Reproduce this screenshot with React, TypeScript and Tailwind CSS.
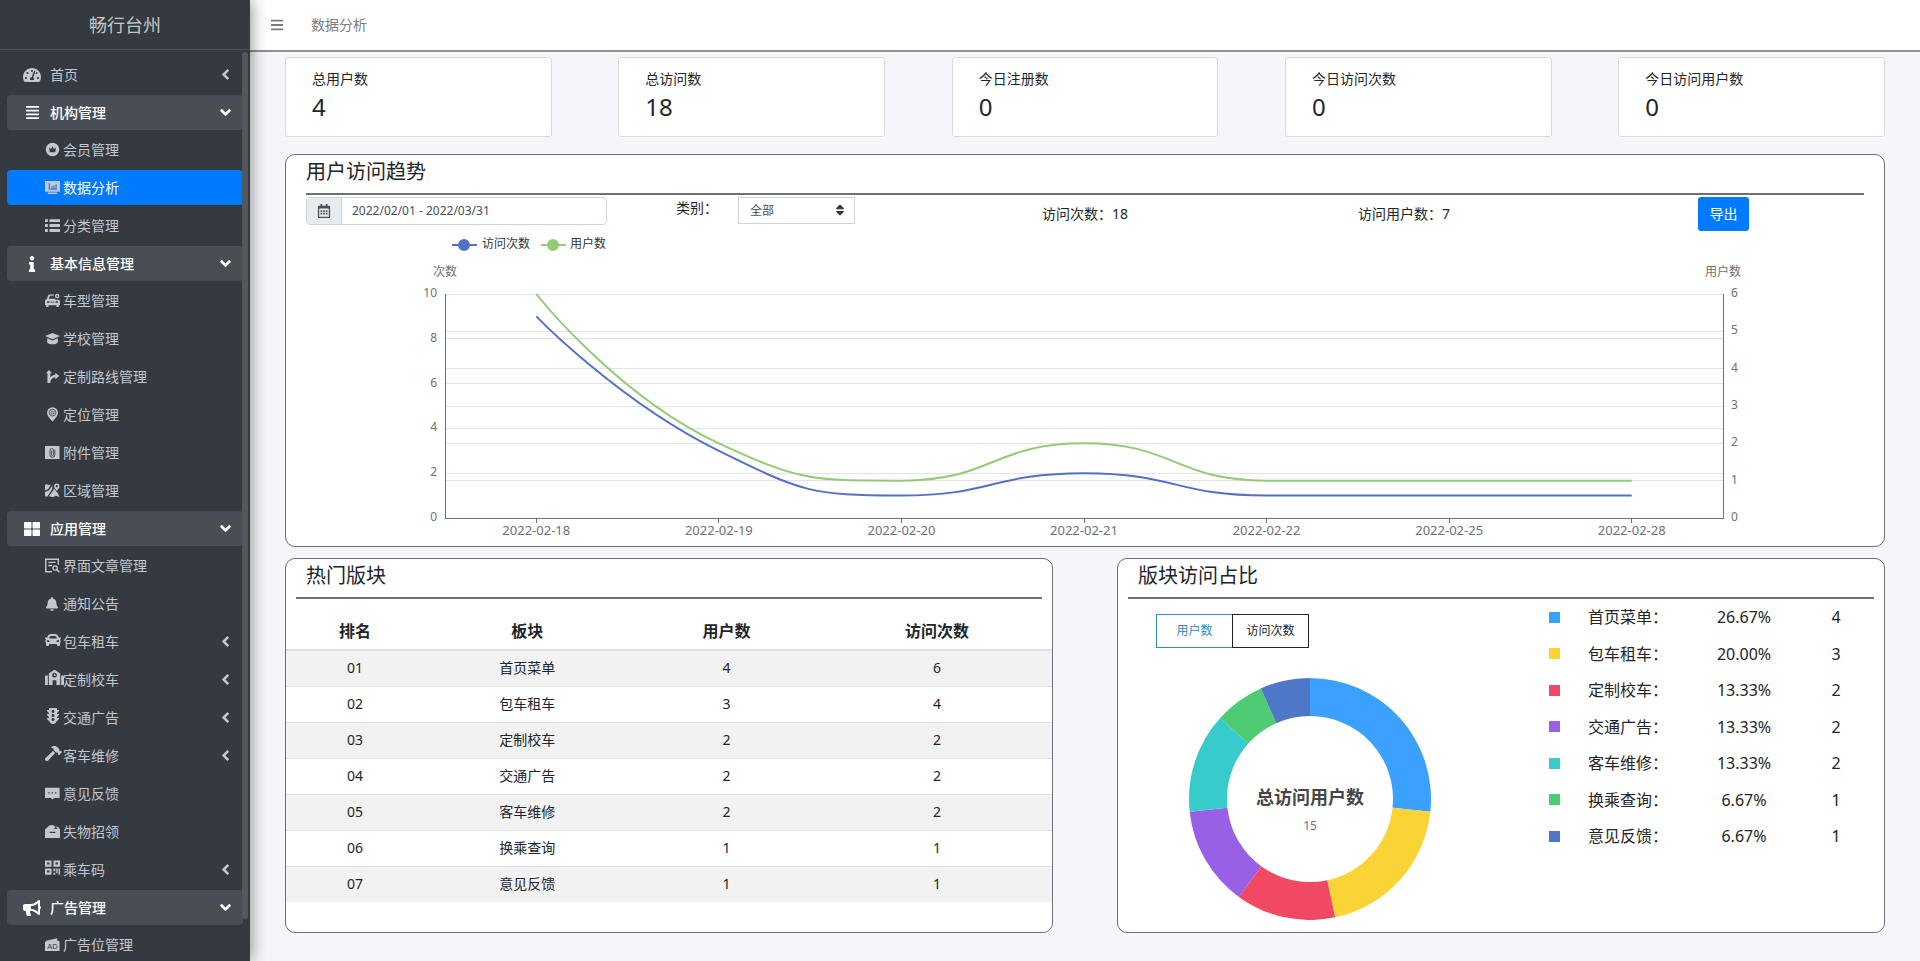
import { useState } from 'react'
import type { ReactNode } from 'react'
import {
  FaAlignJustify,
  FaAngleDown,
  FaAngleLeft,
  FaBars,
  FaBell,
  FaBullhorn,
  FaCar,
  FaHammer,
  FaInfo,
  FaRegCalendarAlt,
  FaSchool,
  FaSort,
  FaTachometerAlt,
  FaThLarge,
  FaTrafficLight,
} from 'react-icons/fa'

type NavItem = {
  label: string
  icon: ReactNode
  kind: 'root' | 'group' | 'sub'
  collapsed?: boolean
}

function Glyph({ children }: { children: ReactNode }) {
  return (
    <svg viewBox="0 0 16 16" className="h-[15px] w-[15px]" fill="currentColor">
      {children}
    </svg>
  )
}

const crownIcon = (
  <Glyph>
    <path fillRule="evenodd" d="M8 .8a7.200 7.200 0 1 1 0 14.400A7.200 7.200 0 0 1 8 .8ZM4.200 5.600l.9 5.200h5.800l.9-5.200-2.200 2L8 4.600l-1.600 3-2.200-2Z" />
  </Glyph>
)

const analysisIcon = (
  <Glyph>
    <path d="M0 1h16v11.500H0zM3 13.300h10v1.500H3z" />
    <path d="M4.600 3.500v6.200h8M7.400 9V6.500M9.600 9V5.800M11.800 9V4.500" fill="none" stroke="#2b7fdb" strokeWidth="1.300" />
  </Glyph>
)

const listIcon = (
  <Glyph>
    <path d="M0 1.200h3v3H0zM0 6.500h3v3H0zM0 11.800h3v3H0zM4.800 1.200H16v3H4.800zM4.800 6.500H16v3H4.800zM4.800 11.800H16v3H4.800z" />
  </Glyph>
)

const vehicleIcon = (
  <Glyph>
    <path fillRule="evenodd" d="M4.300 1.500h5V3H5.200L4.200 6H11v1.200h3.600L16 8.400V13h-1.300v2h-2.400v-2H3.700v2H1.300v-2H0V7.600l1.800-.9L3.400 2.300l.9-.8ZM2.200 8.800v1.700h2.600V8.800H2.200Zm9 0v1.700h2.600V8.800h-2.600ZM6 9.200v1h4v-1H6Z" />
    <path fillRule="evenodd" d="M13 .8a2.400 2.400 0 1 1 0 4.800 2.400 2.400 0 0 1 0-4.800Zm0 1.500a.9.9 0 1 0 0 1.800.9.9 0 0 0 0-1.800Z" />
  </Glyph>
)

const schoolIcon = (
  <Glyph>
    <path d="M8 2 16 5.300 8 8.800 0 5.300 8 2Z" />
    <path d="M2.300 7.600 8 10.200l5.700-2.600v4.600C12.500 13.500 10.500 14.200 8 14.200s-4.500-.7-5.700-2V7.600Z" />
  </Glyph>
)

const routeIcon = (
  <Glyph>
    <path d="M4.200 1 7.400 4.600H5.600v4.200C7.200 7.300 8.800 6.400 11 6.200V4l4.200 3.400L11 10.900V8.800c-2.700.3-4.300 1.900-5.400 4.400V15H2.600V4.600H1L4.200 1Z" />
  </Glyph>
)

const pinIcon = (
  <Glyph>
    <path d="M8 .3a5.800 5.800 0 0 1 5.800 5.700C13.800 9.600 10 13 8 15.700 6 13 2.200 9.600 2.200 6A5.800 5.800 0 0 1 8 .3Z" />
    <circle cx="8" cy="6" r="3.600" fill="none" stroke="#343a40" strokeWidth=".8" />
    <circle cx="8" cy="6" r="1.600" fill="none" stroke="#343a40" strokeWidth=".8" />
  </Glyph>
)

const attachmentIcon = (
  <Glyph>
    <path d="M0 1h15.500v14H0z" />
    <path d="M10.500 5v5.500a2.600 2.600 0 0 1-5.200 0V5.200a1.900 1.900 0 0 1 3.700 0v5.100a1 1 0 0 1-2 0V6" fill="none" stroke="#343a40" strokeWidth=".9" />
  </Glyph>
)

const areaIcon = (
  <Glyph>
    <path d="M0 2.200 1.800 1l2 1.300L6 1.200 5 4 3.400 6.500 0 8V2.200ZM0 9.600l4.300-2L8.200 2.500 7.500 7 2.400 14.600 0 14V9.600Z" />
    <path d="m8.400 8.200 1.500-2 4.400 5.500.9 3.100-3.700-1.100-3.300 1.500-4-1 4.200-6Z" />
    <path fillRule="evenodd" d="M12.600.5A2.900 2.900 0 0 1 15.500 3.400c0 1.900-1.800 3.300-2.900 4.800-1.100-1.500-2.900-2.900-2.900-4.800A2.900 2.900 0 0 1 12.600.5Zm0 1.700a1.200 1.200 0 1 0 0 2.400 1.200 1.200 0 0 0 0-2.400Z" />
  </Glyph>
)

const articleIcon = (
  <Glyph>
    <path d="M7.500 14.700H.8V1.300h13.400v6M3.600 4.700h7.600M3.600 8h4" fill="none" stroke="currentColor" strokeWidth="1.500" />
    <circle cx="10.800" cy="10.600" r="2.300" fill="none" stroke="currentColor" strokeWidth="1.400" />
    <path d="m12.400 12.300 3 3" stroke="currentColor" strokeWidth="1.600" />
  </Glyph>
)

const feedbackIcon = (
  <Glyph>
    <path fillRule="evenodd" d="M0 1.800h15.600v11H9.600L8 14.300l-1.600-1.500H0v-11Zm3.500 4.800v1.300h1.500V6.600H3.500Zm3.600 0v1.300h1.500V6.600H7.100Zm3.600 0v1.300h1.500V6.600h-1.500Z" />
  </Glyph>
)

const lostIcon = (
  <Glyph>
    <path fillRule="evenodd" d="M0 5.800 2.600 3.500 5 1.200h4.500l1 1.600h3.200l2.300 3V15H0V5.800Zm5 2.400v1.400h6V8.200H5Zm5.800-4.700-1 1.700h3.400l-1-1.700h-1.400Z" />
  </Glyph>
)

const qrIcon = (
  <Glyph>
    <path fillRule="evenodd" d="M0 .5h7v6.600H0V.5Zm2.200 2.200v2.200h2.600V2.700H2.200ZM9 .5h7v6.600H9V.5Zm2.200 2.200v2.200h2.600V2.700h-2.600ZM0 9h7v6.600H0V9Zm2.200 2.200v2.200h2.600v-2.200H2.200Z" />
    <path d="M9 9h2v3H9zM12 9h1.500v5H12zM14.500 9H16v6.600h-1.500zM9 13.500h2v2.100H9z" />
  </Glyph>
)

const adIcon = (
  <Glyph>
    <path d="M0 5.500 1.500 4 13 1.200V4h1.500l1 1V15H0V5.500Z" />
    <text x="8" y="12.800" textAnchor="middle" fontSize="8" fontFamily="Liberation Sans" fill="#343a40">AD</text>
  </Glyph>
)

const navItems: NavItem[] = [
  { label: '首页', icon: <FaTachometerAlt size={18} />, kind: 'root', collapsed: true },
  { label: '机构管理', icon: <FaAlignJustify size={15} />, kind: 'group' },
  { label: '会员管理', icon: crownIcon, kind: 'sub' },
  { label: '数据分析', icon: analysisIcon, kind: 'sub' },
  { label: '分类管理', icon: listIcon, kind: 'sub' },
  { label: '基本信息管理', icon: <FaInfo size={16} />, kind: 'group' },
  { label: '车型管理', icon: vehicleIcon, kind: 'sub' },
  { label: '学校管理', icon: schoolIcon, kind: 'sub' },
  { label: '定制路线管理', icon: routeIcon, kind: 'sub' },
  { label: '定位管理', icon: pinIcon, kind: 'sub' },
  { label: '附件管理', icon: attachmentIcon, kind: 'sub' },
  { label: '区域管理', icon: areaIcon, kind: 'sub' },
  { label: '应用管理', icon: <FaThLarge size={16} />, kind: 'group' },
  { label: '界面文章管理', icon: articleIcon, kind: 'sub' },
  { label: '通知公告', icon: <FaBell size={14} />, kind: 'sub' },
  { label: '包车租车', icon: <FaCar size={16} />, kind: 'sub', collapsed: true },
  { label: '定制校车', icon: <FaSchool size={19} />, kind: 'sub', collapsed: true },
  { label: '交通广告', icon: <FaTrafficLight size={16} />, kind: 'sub', collapsed: true },
  { label: '客车维修', icon: <FaHammer size={17} />, kind: 'sub', collapsed: true },
  { label: '意见反馈', icon: feedbackIcon, kind: 'sub' },
  { label: '失物招领', icon: lostIcon, kind: 'sub' },
  { label: '乘车码', icon: qrIcon, kind: 'sub', collapsed: true },
  { label: '广告管理', icon: <FaBullhorn size={18} />, kind: 'group' },
  { label: '广告位管理', icon: adIcon, kind: 'sub' },
]

const stats = [
  { label: '总用户数', value: 4 },
  { label: '总访问数', value: 18 },
  { label: '今日注册数', value: 0 },
  { label: '今日访问次数', value: 0 },
  { label: '今日访问用户数', value: 0 },
]

const sections = [
  { name: '首页菜单', users: 4, visits: 6, percent: '26.67%', color: '#3ba1ff' },
  { name: '包车租车', users: 3, visits: 4, percent: '20.00%', color: '#fad337' },
  { name: '定制校车', users: 2, visits: 2, percent: '13.33%', color: '#f14864' },
  { name: '交通广告', users: 2, visits: 2, percent: '13.33%', color: '#9860e5' },
  { name: '客车维修', users: 2, visits: 2, percent: '13.33%', color: '#37cbcb' },
  { name: '换乘查询', users: 1, visits: 1, percent: '6.67%', color: '#4fcb74' },
  { name: '意见反馈', users: 1, visits: 1, percent: '6.67%', color: '#4f77c8' },
]

const dates = ['2022-02-18', '2022-02-19', '2022-02-20', '2022-02-21', '2022-02-22', '2022-02-25', '2022-02-28']

// plot area of the trend chart
const LEFT = 139
const RIGHT = 1417
const TOP = 62
const BOTTOM = 286
const STEP = (RIGHT - LEFT) / dates.length

const pointX = (i: number) => LEFT + STEP * (i + 0.5)
const pointY = (value: number, max: number) => BOTTOM - (value / max) * (BOTTOM - TOP)

const clamp = (v: number, a: number, b: number) => Math.max(Math.min(v, Math.max(a, b)), Math.min(a, b))

// bezier through all points, control points kept inside each segment's box
function linePath(values: number[], max: number) {
  const pts = values.map((v, i) => [pointX(i), pointY(v, max)])
  let d = `M${pts[0][0]} ${pts[0][1]}`
  let out = pts[0]
  for (let i = 1; i < pts.length; i++) {
    const prev = pts[i - 1]
    const p = pts[i]
    const next = pts[i + 1]
    let into = p
    let nextOut = p
    if (next) {
      const before = Math.hypot(p[0] - prev[0], p[1] - prev[1])
      const after = Math.hypot(next[0] - p[0], next[1] - p[1])
      const ratio = after / (before + after)
      nextOut = p.map((c, k) => clamp(c + (next[k] - prev[k]) * 0.5 * ratio, c, next[k]))
      into = p.map((c, k) => clamp(c - ((nextOut[k] - c) * before) / after, prev[k], c))
      nextOut = p.map((c, k) => c + ((c - into[k]) * after) / before)
    }
    d += ` C${out[0]} ${out[1]} ${into[0]} ${into[1]} ${p[0]} ${p[1]}`
    out = nextOut
  }
  return d
}

function slicePath(start: number, end: number) {
  const point = (r: number, t: number) => {
    const a = t * Math.PI * 2
    return `${121 + r * Math.sin(a)} ${121 - r * Math.cos(a)}`
  }
  const large = end - start > 0.5 ? 1 : 0
  return `M${point(121, start)} A121 121 0 ${large} 1 ${point(121, end)} L${point(83, end)} A83 83 0 ${large} 0 ${point(83, start)} Z`
}

function NavLink({ item, active }: { item: NavItem; active: boolean }) {
  const tone = active
    ? 'mb-[3px] bg-[#007bff] text-white'
    : item.kind === 'group'
      ? 'mb-[2px] bg-[#494e54] font-medium text-white'
      : 'mb-[3px] text-[#c2c7d0]'
  return (
    <a href="#" className={`flex h-[35px] shrink-0 items-center rounded-sm pr-[9px] text-sm ${tone}`}>
      {item.kind === 'sub' ? (
        <span className={`ml-[38px] flex w-[18px] shrink-0 items-center text-[#c2c7d0] ${item.collapsed ? 'pb-1' : ''}`}>
          <span className="shrink-0">{item.icon}</span>
        </span>
      ) : (
        <span className="mr-2 ml-[15px] flex w-5 shrink-0 justify-center">{item.icon}</span>
      )}
      <span className="flex-1">{item.label}</span>
      {item.collapsed && <FaAngleLeft size={17} />}
      {item.kind === 'group' && <FaAngleDown size={17} />}
    </a>
  )
}

function Sidebar() {
  return (
    <aside className="relative z-10 flex h-screen w-[250px] shrink-0 flex-col overflow-hidden bg-[#343a40] shadow-[0_0_16px_rgba(0,0,0,0.5)]">
      <div className="flex h-[50px] shrink-0 items-center justify-center border-b border-[#4b545c] text-lg text-[#c6c8ca]">
        畅行台州
      </div>
      <nav className="flex flex-col px-[7px] pt-[7px]">
        {navItems.map((item) => (
          <NavLink key={item.label} item={item} active={item.label === '数据分析'} />
        ))}
      </nav>
      <div className="absolute top-[52px] right-[2px] bottom-[42px] w-[6px] rounded-full bg-[#54585d]" />
    </aside>
  )
}

function TrendChart() {
  const leftTicks = [0, 2, 4, 6, 8, 10]
  const rightTicks = [0, 1, 2, 3, 4, 5, 6]
  return (
    <svg viewBox="0 0 1558 314" className="w-full" fontSize="12" fill="#6e7079">
      <g strokeWidth="2">
        <path d="M146 13h25" stroke="#5470c6" />
        <circle cx="158" cy="13" r="5" fill="#5470c6" stroke="#5470c6" />
        <path d="M235 13h25" stroke="#91cc75" />
        <circle cx="247" cy="13" r="5" fill="#91cc75" stroke="#91cc75" />
      </g>
      <g fill="#333">
        <text x="176" y="16">访问次数</text>
        <text x="264" y="16">用户数</text>
      </g>
      <text x={LEFT} y="44" textAnchor="middle">次数</text>
      <text x={RIGHT} y="44" textAnchor="middle">用户数</text>
      <g stroke="#e0e3e9" shapeRendering="crispEdges">
        {leftTicks.slice(1).map((t) => (
          <line key={t} x1={LEFT} x2={RIGHT} y1={pointY(t, 10)} y2={pointY(t, 10)} />
        ))}
        {rightTicks.slice(1).map((t) => (
          <line key={t} x1={LEFT} x2={RIGHT} y1={pointY(t, 6)} y2={pointY(t, 6)} />
        ))}
      </g>
      <g stroke="#6e7079" shapeRendering="crispEdges">
        <path d={`M${LEFT} ${TOP}V${BOTTOM}H${RIGHT}V${TOP}`} fill="none" />
        {dates.map((d, i) => (
          <line key={d} x1={pointX(i)} x2={pointX(i)} y1={BOTTOM} y2={BOTTOM + 5} />
        ))}
      </g>
      {leftTicks.map((t) => (
        <text key={t} x={LEFT - 8} y={pointY(t, 10) + 3} textAnchor="end">{t}</text>
      ))}
      {rightTicks.map((t) => (
        <text key={t} x={RIGHT + 8} y={pointY(t, 6) + 3}>{t}</text>
      ))}
      {dates.map((d, i) => (
        <text key={d} x={pointX(i)} y={BOTTOM + 17} textAnchor="middle" fontSize="13">{d}</text>
      ))}
      <path d={linePath([9, 3, 1, 2, 1, 1, 1], 10)} fill="none" stroke="#5470c6" strokeWidth="2" />
      <path d={linePath([6, 2, 1, 2, 1, 1, 1], 6)} fill="none" stroke="#91cc75" strokeWidth="2" />
    </svg>
  )
}

function TrendPanel() {
  return (
    <section className="mt-[17px] rounded-[10px] border border-[#6c6f76] bg-white px-5">
      <h2 className="h-[40px] border-b-2 border-[#6e7074] pt-[3px] text-xl leading-7">用户访问趋势</h2>
      <div className="mt-[2px] grid h-[35px] grid-cols-[370fr_366fr_316fr_340fr_166fr] items-start text-sm">
        <label className="flex h-7 w-[301px] overflow-hidden rounded-sm border border-[#ced4da]">
          <span className="flex w-[35px] shrink-0 items-center justify-center border-r border-[#ced4da] bg-[#e9ecef] text-[#495057]">
            <FaRegCalendarAlt size={14} />
          </span>
          <input type="text" aria-label="日期范围" defaultValue="2022/02/01 - 2022/03/31" className="w-full px-[10px] text-xs text-[#495057] outline-none" />
        </label>
        <div className="flex items-start">
          <label htmlFor="category" className="w-[62px] leading-[22px]">类别：</label>
          <div className="relative">
            <select id="category" className="h-[27px] w-[117px] appearance-none border border-[#ced4da] bg-white px-[11px] text-xs text-[#495057]">
              <option>全部</option>
            </select>
            <FaSort size={14} className="pointer-events-none absolute top-[6px] right-2 text-[#343a40]" />
          </div>
        </div>
        <p className="pt-[7px]">访问次数：18</p>
        <p className="pt-[7px]">访问用户数：7</p>
        <button type="button" className="h-[34px] w-[51px] rounded-[3px] bg-[#007bff] text-sm text-white">导出</button>
      </div>
      <TrendChart />
    </section>
  )
}

function PanelTitle({ children }: { children: ReactNode }) {
  return (
    <h2 className="mx-[10px] h-[40px] border-b-2 border-[#6e7074] px-[10px] pt-[3px] text-xl leading-7">{children}</h2>
  )
}

function HotPanel() {
  return (
    <section className="w-[48%] rounded-[10px] border border-[#6c6f76] bg-white pb-[30px]">
      <PanelTitle>热门版块</PanelTitle>
      <table className="mt-[13px] w-full table-fixed text-center">
        <colgroup>
          <col className="w-[18%]" />
          <col className="w-[27%]" />
          <col className="w-[25%]" />
          <col className="w-[30%]" />
        </colgroup>
        <thead>
          <tr className="h-[38px] border-b-2 border-[#dee2e6] text-base text-[#212529]">
            <th>排名</th>
            <th>板块</th>
            <th>用户数</th>
            <th>访问次数</th>
          </tr>
        </thead>
        <tbody>
          {sections.map((s, i) => (
            <tr key={s.name} className="h-9 border-t border-[#dee2e6] text-sm odd:bg-[#f2f2f2]">
              <td>{`0${i + 1}`}</td>
              <td>{s.name}</td>
              <td>{s.users}</td>
              <td>{s.visits}</td>
            </tr>
          ))}
        </tbody>
      </table>
    </section>
  )
}

function SharePanel() {
  const [mode, setMode] = useState<'users' | 'visits'>('users')
  const total = sections.reduce((sum, s) => sum + s.users, 0)
  let sum = 0
  const slices = sections.map((s) => {
    const start = sum / total
    sum += s.users
    return { color: s.color, path: slicePath(start, sum / total) }
  })
  const tab = 'h-[34px] w-[77px] border'
  const on = 'border-[#2f8fc6] text-[#3385c6]'
  const off = 'border-[#212529] text-[#212529]'

  return (
    <section className="w-[48%] rounded-[10px] border border-[#6c6f76] bg-white">
      <PanelTitle>版块访问占比</PanelTitle>
      <div className="flex">
        <div className="w-1/2 pt-[15px]">
          <div className="flex pl-[38px] text-xs">
            <button type="button" onClick={() => setMode('users')} className={`${tab} ${mode === 'users' ? on : off}`}>用户数</button>
            <button type="button" onClick={() => setMode('visits')} className={`${tab} -ml-px ${mode === 'visits' ? on : off}`}>访问次数</button>
          </div>
          <svg viewBox="0 0 242 242" className="mt-[30px] ml-[71px] w-[242px]" textAnchor="middle">
            {slices.map((s) => (
              <path key={s.color} d={s.path} fill={s.color} />
            ))}
            <text x="121" y="126" fontSize="18" fontWeight="bold" fill="#464646">总访问用户数</text>
            <text x="121" y="152" fontSize="12" fill="#6e7079">{total}</text>
          </svg>
        </div>
        <ul className="flex h-[255px] flex-1 flex-col justify-between pr-[10px] pl-12 text-base">
          {sections.map((s) => (
            <li key={s.name} className="flex h-9 items-center">
              <span className="mr-7 h-[11px] w-[11px] shrink-0" style={{ backgroundColor: s.color }} />
              <span className="w-[100px]">{s.name}：</span>
              <span className="w-[112px] text-center">{s.percent}</span>
              <span className="w-[72px] text-center">{s.users}</span>
            </li>
          ))}
        </ul>
      </div>
    </section>
  )
}

export default function App() {
  return (
    <div className="flex h-screen overflow-hidden bg-[#f4f6f9] font-['Noto_Sans','Noto_Sans_CJK_SC',sans-serif] text-[#212529]">
      <Sidebar />
      <div className="flex min-w-0 flex-1 flex-col">
        <header className="flex h-[52px] shrink-0 items-center border-b-2 border-[#8f9096] bg-white pl-5 text-sm text-[#7b7c80]">
          <button type="button" aria-label="菜单" className="w-[41px]">
            <FaBars size={14} />
          </button>
          数据分析
        </header>
        <main className="px-[35px] pt-[5px]">
          <div className="flex justify-between">
            {stats.map((s) => (
              <div key={s.label} className="h-20 w-1/6 rounded-[3px] border border-[#d8dade] bg-white px-[26px] pt-[11px]">
                <p className="text-sm leading-5">{s.label}</p>
                <p className="pt-[3px] text-2xl leading-[30px]">{s.value}</p>
              </div>
            ))}
          </div>
          <TrendPanel />
          <div className="mt-[11px] flex justify-between">
            <HotPanel />
            <SharePanel />
          </div>
        </main>
      </div>
    </div>
  )
}
